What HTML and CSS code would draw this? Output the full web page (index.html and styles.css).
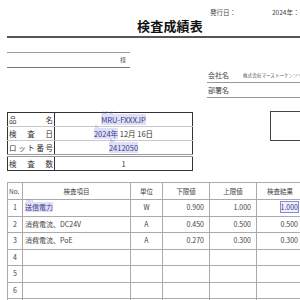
FILE: index.html
```html
<!DOCTYPE html>
<html lang="ja">
<head>
<meta charset="utf-8">
<title>検査成績表</title>
<link rel="stylesheet" href="styles.css">
</head>
<body>
<div class="page">
  <div class="meta"><span class="meta-label">発行日：</span><span>2024年：</span></div>
  <h1 class="title">検査成績表</h1>
  <div class="rule"></div>

  <div class="addr">
    <div class="to"><span>様</span></div>
    <div class="co">
      <div class="co-row"><span class="co-label">会社名</span><span class="co-name">株式会社マーストーケンソリューション</span></div>
      <div class="co-row"><span class="co-label">部署名</span></div>
    </div>
  </div>

  <div class="info">
    <table class="spec">
      <tr><th><span class="jl"><span>品</span><span>名</span></span></th><td><span class="fld">MRU-FXXXJP<span class="kana">ｴﾑｱｰﾙﾕｰ</span></span></td></tr>
      <tr><th><span class="jl"><span>検</span><span>査</span><span>日</span></span></th><td><span class="fld">2024年<span class="kana">ﾈﾝ</span></span> 12月 16日</td></tr>
      <tr class="dbl"><th><span class="jl"><span>ロ</span><span>ッ</span><span>ト</span><span>番</span><span>号</span></span></th><td><span class="fld">2412050<span class="kana">ﾛｯﾄ</span></span></td></tr>
      <tr><th><span class="jl"><span>検</span><span>査</span><span>数</span></span></th><td>1</td></tr>
    </table>
    <div class="stamp"></div>
  </div>

  <table class="results">
    <colgroup>
      <col class="c-no"><col class="c-item"><col class="c-unit"><col class="c-num"><col class="c-num"><col class="c-num">
    </colgroup>
    <thead>
      <tr><th class="no">No.</th><th>検査項目</th><th>単位</th><th>下限値</th><th>上限値</th><th>検査結果</th></tr>
    </thead>
    <tbody>
      <tr><td class="no">1</td><td class="item"><span class="fld">送信電力<span class="kana">ｿｳｼﾝ</span></span></td><td class="unit">W</td><td class="num">0.900</td><td class="num">1.000</td><td class="num"><span class="box">1.000</span></td></tr>
      <tr><td class="no">2</td><td class="item">消費電流、DC24V</td><td class="unit">A</td><td class="num">0.450</td><td class="num">0.500</td><td class="num">0.500</td></tr>
      <tr><td class="no">3</td><td class="item">消費電流、PoE</td><td class="unit">A</td><td class="num">0.270</td><td class="num">0.300</td><td class="num">0.300</td></tr>
      <tr><td class="no">4</td><td></td><td></td><td></td><td></td><td></td></tr>
      <tr><td class="no">5</td><td></td><td></td><td></td><td></td><td></td></tr>
      <tr><td class="no">6</td><td></td><td></td><td></td><td></td><td></td></tr>
      <tr><td class="no">7</td><td></td><td></td><td></td><td></td><td></td></tr>
    </tbody>
  </table>
</div>
</body>
</html>
```
FILE: styles.css
```css
html, body {
  margin: 0;
  background: #fff;
}
body {
  width: 300px;
  height: 300px;
  overflow: hidden;
  font-family: "Noto Sans CJK JP", "Noto Sans", sans-serif;
  color: #333;
}
.page {
  width: 380px;
  padding-left: 7px;
}
.meta {
  padding-top: 8px;
  height: 9px;
  line-height: 9px;
  font-size: 6.5px;
  padding-left: 203px;
  display: flex;
  color: #444;
}
.meta-label {
  width: 62px;
}
.title {
  margin: 0 0 0 130px;
  font-size: 13px;
  line-height: 18px;
  height: 18px;
  font-weight: bold;
  color: #111;
  letter-spacing: 0.2px;
}
.rule {
  margin-top: 1px;
  border-top: 2px solid #555;
}
.addr {
  display: flex;
  align-items: flex-start;
}
.to {
  width: 119px;
  margin-top: 14px;
  height: 14px;
  border-top: 1px solid #9a9a9a;
  border-bottom: 1px solid #777;
  font-size: 6px;
  line-height: 14px;
  text-align: right;
  padding-right: 4px;
  color: #555;
}
.co {
  margin-left: 77px;
  margin-top: 30px;
  width: 140px;
}
.co-row {
  height: 14px;
  line-height: 14px;
  border-bottom: 1px solid #999;
  font-size: 7px;
  padding-left: 1px;
  display: flex;
  color: #444;
}
.co-label {
  width: 35px;
}
.co-name {
  font-size: 4.6px;
  color: #555;
}
.info {
  display: flex;
  align-items: flex-start;
  margin-top: 14px;
}
.spec {
  width: 186px;
  border-collapse: collapse;
  border: 1.5px solid #333;
  table-layout: fixed;
}
.spec th, .spec td {
  height: 13px;
  padding: 0;
  font-size: 7.5px;
  font-weight: normal;
  line-height: 13px;
  border-bottom: 1px solid #c8c8c8;
}
.spec th {
  width: 44px;
  border-right: 1.5px solid #333;
  padding: 0 1px;
}
.spec td {
  text-align: center;
}
.spec tr.dbl th, .spec tr.dbl td {
  border-bottom: 3px double #999;
}
.spec tr:last-child th, .spec tr:last-child td {
  border-bottom: 0;
}
.jl {
  display: flex;
  justify-content: space-between;
}
.fld {
  position: relative;
  background: #dfe0f7;
  color: #3b3b8a;
}
.kana {
  position: absolute;
  left: 1px;
  top: -3px;
  font-size: 3.5px;
  line-height: 4px;
  color: #6a6ad0;
  white-space: nowrap;
}
.stamp {
  margin-left: 77px;
  margin-top: -1px;
  width: 45px;
  height: 28px;
  border: 1px solid #444;
}
.results {
  margin-top: 11px;
  width: 296px;
  border-collapse: collapse;
  table-layout: fixed;
  border-top: 1.5px solid #333;
  border-left: 1.5px solid #333;
}
.c-no { width: 15px; }
.c-item { width: 108px; }
.c-unit { width: 32px; }
.c-num { width: 47px; }
.results th, .results td {
  border: 1px solid #aaa;
  padding: 0;
  font-weight: normal;
  height: 15.5px;
  line-height: 15px;
  font-size: 7px;
  color: #444;
  white-space: nowrap;
}
.results th {
  height: 16px;
  font-size: 6.5px;
  text-align: center;
}
.results th.no {
  text-align: left;
  padding-left: 1px;
}
.results td.no {
  text-align: center;
}
.results td.item {
  padding-left: 2px;
}
.results td.unit {
  text-align: center;
}
.results td.num {
  text-align: right;
  padding-right: 5px;
}
.box {
  background: #eef0fb;
  outline: 1px solid #8a8ad8;
  color: #3b3b8a;
}
```
